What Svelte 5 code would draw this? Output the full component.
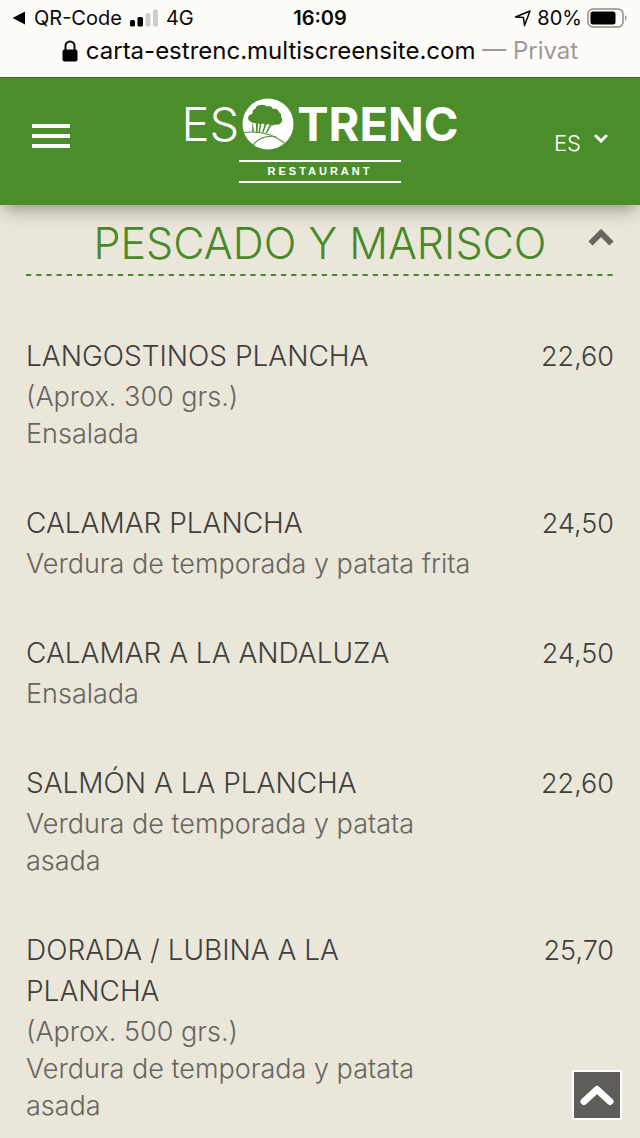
<script lang="ts">
  const dishes = [
    { name: 'LANGOSTINOS PLANCHA', price: '22,60', notes: ['(Aprox. 300 grs.)', 'Ensalada'] },
    { name: 'CALAMAR PLANCHA', price: '24,50', notes: ['Verdura de temporada y patata frita'] },
    { name: 'CALAMAR A LA ANDALUZA', price: '24,50', notes: ['Ensalada'] },
    { name: 'SALMÓN A LA PLANCHA', price: '22,60', notes: ['Verdura de temporada y patata asada'] },
    {
      name: 'DORADA / LUBINA A LA PLANCHA',
      price: '25,70',
      notes: ['(Aprox. 500 grs.)', 'Verdura de temporada y patata asada']
    }
  ];

  let open = $state(true);

  function toTop() {
    window.scrollTo({ top: 0, behavior: 'smooth' });
  }
</script>

<div class="browser">
  <div class="status">
    <div class="side">
      <svg class="back" viewBox="0 0 14 14" aria-hidden="true"><path d="M0.5 7 13 .5v13z" /></svg>
      <span>QR-Code</span>
      <svg class="signal" viewBox="0 0 28 18" aria-hidden="true">
        <rect x="0" y="11" width="5" height="6.500" rx="1.500" />
        <rect x="7.500" y="8" width="5.500" height="9.500" rx="1.500" />
        <rect class="off" x="15.500" y="4" width="5" height="13.500" rx="1.500" />
        <rect class="off" x="23" y="0.500" width="5" height="17" rx="1.500" />
      </svg>
      <span>4G</span>
    </div>
    <strong>16:09</strong>
    <div class="side end">
      <svg class="arrow" viewBox="0 0 18 18" aria-hidden="true"><path d="M1.500 8 16 2 10.500 16.500 9.500 8.500z" /></svg>
      <span>80%</span>
      <svg class="battery" viewBox="0 0 41 20" aria-hidden="true">
        <rect class="case" x="1" y="1" width="35" height="18" rx="5" />
        <rect x="3.500" y="3.500" width="25" height="13" rx="2.500" />
        <path class="cap" d="M38 7q3 3 0 6z" />
      </svg>
    </div>
  </div>
  <div class="address">
    <svg class="lock" viewBox="0 0 16 22" aria-hidden="true">
      <rect x="0.500" y="9.500" width="15" height="12" rx="2" />
      <path d="M3.500 10V6a4.500 4.500 0 0 1 9 0v4" />
    </svg>
    <span>carta-estrenc.multiscreensite.com <span class="mode">— Privat</span></span>
  </div>
</div>

<header>
  <button class="menu" aria-label="Menú"><i></i><i></i><i></i></button>
  <a class="logo" href="#inicio" aria-label="Es Trenc Restaurant">
    <span class="word">
      <span class="light">ES</span>
      <svg viewBox="0 0 52 52" aria-hidden="true">
        <circle cx="26" cy="26" r="25.500" fill="#fff" />
        <g fill="#4b8d2b">
          <path d="M8.500 23.500Q5 22 6.500 18.500q.5-2 4-2.500-.5-4 3-5.500 1-3.500 5-3.500 4-1 6.500 1.500Q29 6.500 31 11q4.500-1 6 3 3 2 2 4.500 2.500 3.500 0 6.500-2 2.500-6 1.500-3.500 2-6.500-.5-3.500 1.500-6-.5-3 1.500-5-.5-4.500 1-7-1.500z" />
          <path d="M10.500 24l1.500 9.500H10zM14 24l2 1.500-.5 8.500H14zM18 25h1.500l-1.500 9h-1.500zM23 25l1.500 1-3 8.500H20zM28 26l1.500 1-4.500 8h-1.500z" />
        </g>
        <g fill="none" stroke="#4b8d2b" stroke-width="1.100">
          <path d="M1 34.500Q25 31.500 42.500 45M11 47q8-10.500 23-8.500" />
        </g>
      </svg>
      <span class="bold">TRENC</span>
    </span>
    <span class="sub">RESTAURANT</span>
  </a>
  <button class="lang">
    ES
    <svg viewBox="0 0 14 9" aria-hidden="true"><path d="M2 2l5 5 5-5" /></svg>
  </button>
</header>

<main>
  <h1>
    <button aria-expanded={open} onclick={() => (open = !open)}>
      <span>PESCADO Y MARISCO</span>
      <svg class:closed={!open} viewBox="0 0 26 17" aria-hidden="true"><path d="M2.500 14.500 13 4l10.500 10.500" /></svg>
    </button>
  </h1>
  <svg class="rule" aria-hidden="true"><line x1="0" y1="1" x2="100%" y2="1" /></svg>
  {#if open}
    <ul>
      {#each dishes as dish}
        <li>
          <div class="text">
            <h2>{dish.name}</h2>
            {#each dish.notes as note}
              <p>{note}</p>
            {/each}
          </div>
          <span class="price">{dish.price}</span>
        </li>
      {/each}
    </ul>
  {/if}
</main>

<button class="top" aria-label="Volver arriba" onclick={toTop}>
  <svg viewBox="0 0 36 24" aria-hidden="true"><path d="M5 18.500 18 6.500l13 12" /></svg>
</button>

<style>
  :global(body) {
    background: #eae6da;
    font-family: Inter, "Liberation Sans", sans-serif;
    color: #403f3c;
  }
  button {
    border: 0;
    padding: 0;
    background: none;
    font: inherit;
    color: inherit;
    cursor: pointer;
  }
  svg {
    flex: none;
    display: block;
  }
  .browser {
    background: #fefcf9;
    color: #080808;
    padding: 6px 12px 11px;
    border-bottom: 1px solid #3a6b25;
  }
  .status {
    display: grid;
    grid-template-columns: 1fr auto 1fr;
    align-items: center;
    font-size: 20px;
    line-height: 24px;
  }
  .status strong { font-weight: 600; }
  .side {
    display: flex;
    align-items: center;
    gap: 8px;
  }
  .end { justify-content: flex-end; gap: 5px; }
  .back { width: 14px; height: 14px; }
  .signal { width: 28px; height: 18px; }
  .off { fill: #cfcdca; }
  .arrow {
    width: 18px;
    height: 18px;
    fill: none;
    stroke: #080808;
    stroke-width: 1.5;
    stroke-linejoin: round;
  }
  .battery { width: 41px; height: 20px; }
  .case { fill: none; stroke: #8d8b88; stroke-width: 1.5; }
  .cap { fill: #8d8b88; }
  .address {
    display: flex;
    justify-content: center;
    align-items: center;
    gap: 8px;
    padding-top: 5px;
    font-size: 24px;
    line-height: 31px;
    white-space: nowrap;
  }
  .mode { color: #9f9996; }
  .lock { width: 16px; height: 22px; }
  .lock path { fill: none; stroke: #080808; stroke-width: 2; }
  header {
    position: relative;
    display: grid;
    grid-template-columns: 1fr auto 1fr;
    padding: 19px 32px 22px;
    background: #4b8d2b;
    color: #fff;
    box-shadow: 0 8px 16px -4px rgba(60, 55, 45, 0.5);
  }
  .menu {
    display: grid;
    gap: 6px;
    width: 38px;
    align-self: start;
    padding-top: 27px;
  }
  .menu i { height: 4px; background: #fff; }
  .logo {
    display: flex;
    flex-direction: column;
    align-items: center;
    color: #fff;
    text-decoration: none;
  }
  .word {
    display: flex;
    align-items: center;
    gap: 3px;
    font-size: 47px;
    line-height: 54px;
  }
  .word svg { width: 52px; height: 52px; }
  .light { font-weight: 300; }
  .bold { font-weight: 700; }
  .sub {
    width: 162px;
    box-sizing: border-box;
    margin-top: 9px;
    border: solid #fff;
    border-width: 2px 0;
    font-family: "Liberation Sans", sans-serif;
    font-size: 11px;
    font-weight: 700;
    line-height: 19px;
    letter-spacing: 3px;
    text-align: center;
  }
  .lang {
    justify-self: end;
    align-self: start;
    display: flex;
    gap: 13px;
    padding-top: 32px;
    font-size: 22px;
    font-weight: 300;
    line-height: 28px;
  }
  .lang svg {
    width: 14px;
    height: 9px;
    margin-top: 5px;
    fill: none;
    stroke: #fff;
    stroke-width: 3;
    stroke-linecap: round;
  }
  main { padding: 13px 26px 16px; }
  h1, h2, p, ul { margin: 0; padding: 0; }
  h1 button {
    display: flex;
    width: 100%;
    color: #488a2a;
    font-size: 43px;
    font-weight: 300;
    line-height: 50px;
  }
  h1 span { flex: 1; padding-left: 26px; }
  h1 svg {
    width: 26px;
    height: 17px;
    margin-top: 11px;
    fill: none;
    stroke: #666560;
    stroke-width: 6;
  }
  .closed { transform: rotate(180deg); }
  .rule {
    width: 100%;
    height: 2px;
    margin-top: 6px;
    stroke: #488a2a;
    stroke-width: 2;
    stroke-dasharray: 5.200 5;
  }
  ul {
    list-style: none;
    display: grid;
    gap: 51px;
    padding-top: 60px;
  }
  li {
    display: flex;
    justify-content: space-between;
    align-items: flex-start;
  }
  .text { width: 76%; }
  h2, .price {
    font-weight: 300;
    line-height: 41px;
  }
  h2 {
    padding-bottom: 1px;
    font-size: 28px;
  }
  .price { font-size: 27px; }
  p {
    color: #666560;
    font-size: 27px;
    font-weight: 300;
    line-height: 37px;
  }
  .top {
    position: fixed;
    right: 18px;
    bottom: 18px;
    display: grid;
    place-items: center;
    width: 50px;
    height: 50px;
    border: 2px solid #fff;
    background: #5f5d59;
  }
  .top svg {
    width: 36px;
    height: 24px;
    fill: none;
    stroke: #fff;
    stroke-width: 7;
    stroke-linecap: round;
    stroke-linejoin: round;
  }
</style>
